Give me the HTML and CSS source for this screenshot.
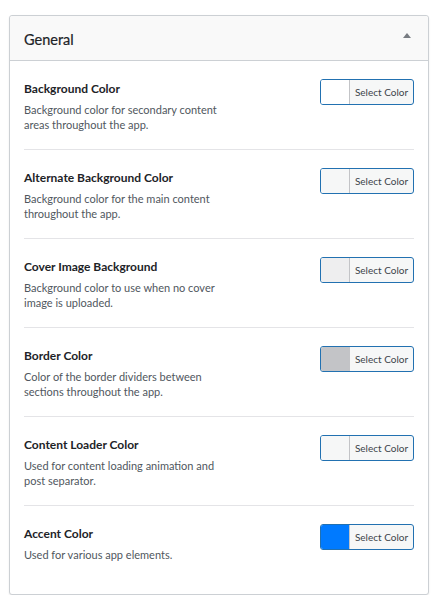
FILE: index.html
```html
<!DOCTYPE html>
<html lang="en">
<head>
    <meta charset="UTF-8">
    <meta name="viewport" content="width=device-width, initial-scale=1.0">
    <title>General Colors</title>
    <link rel="stylesheet" href="styles.css">
</head>
<body>
    <div class="panel">
        <div class="panel-header">
            <div class="panel-title">General</div>
            <span class="toggle"></span>
        </div>
        <div class="panel-body">
            <div class="setting">
                <div class="setting-info">
                    <div class="setting-title">Background Color</div>
                    <div class="setting-desc">Background color for secondary content areas throughout the app.</div>
                </div>
                <button class="color-button"><span class="swatch swatch-white"></span><span class="label">Select Color</span></button>
            </div>
            <div class="setting">
                <div class="setting-info">
                    <div class="setting-title">Alternate Background Color</div>
                    <div class="setting-desc">Background color for the main content throughout the app.</div>
                </div>
                <button class="color-button"><span class="swatch swatch-alt"></span><span class="label">Select Color</span></button>
            </div>
            <div class="setting">
                <div class="setting-info">
                    <div class="setting-title">Cover Image Background</div>
                    <div class="setting-desc">Background color to use when no cover image is uploaded.</div>
                </div>
                <button class="color-button"><span class="swatch swatch-cover"></span><span class="label">Select Color</span></button>
            </div>
            <div class="setting">
                <div class="setting-info">
                    <div class="setting-title">Border Color</div>
                    <div class="setting-desc">Color of the border dividers between sections throughout the app.</div>
                </div>
                <button class="color-button"><span class="swatch swatch-border"></span><span class="label">Select Color</span></button>
            </div>
            <div class="setting">
                <div class="setting-info">
                    <div class="setting-title">Content Loader Color</div>
                    <div class="setting-desc">Used for content loading animation and post separator.</div>
                </div>
                <button class="color-button"><span class="swatch swatch-loader"></span><span class="label">Select Color</span></button>
            </div>
            <div class="setting last">
                <div class="setting-info">
                    <div class="setting-title">Accent Color</div>
                    <div class="setting-desc">Used for various app elements.</div>
                </div>
                <button class="color-button"><span class="swatch swatch-accent"></span><span class="label">Select Color</span></button>
            </div>
        </div>
    </div>
</body>
</html>
```

FILE: styles.css
```css
body {
    margin: 0;
    background: #fff;
    font-family: Lato, 'Open Sans', sans-serif;
    color: #1d2327;
}

.panel {
    margin: 15px 10px 0 9px;
    border: 1px solid #ccd0d4;
    border-radius: 3px;
    box-shadow: 0 1px 2px rgba(0, 0, 0, 0.08);
    background: #fff;
}

.panel-header {
    display: flex;
    align-items: center;
    justify-content: space-between;
    height: 44px;
    padding: 0 17px 0 14px;
    background: #f9f9f9;
    border-bottom: 1px solid #ccd0d4;
    border-radius: 3px 3px 0 0;
}

.panel-title {
    font-size: 14.5px;
    padding-top: 2px;
    -webkit-text-stroke: 0.2px #1d2327;
}

.toggle {
    width: 0;
    height: 0;
    border-left: 4px solid transparent;
    border-right: 4px solid transparent;
    border-bottom: 5px solid #787c82;
    margin-bottom: 6px;
}

.panel-body {
    padding: 0 14px 0 14px;
}

.setting {
    display: flex;
    justify-content: space-between;
    align-items: flex-start;
    height: 88px;
    border-bottom: 1px solid #e4e4e7;
}

.setting.last {
    border-bottom: none;
    height: 88px;
}

.setting-info {
    width: 200px;
    padding-top: 20px;
}

.setting-title {
    font-size: 12px;
    font-weight: bold;
    line-height: 15px;
}

.setting-desc {
    margin-top: 6px;
    font-size: 11px;
    line-height: 15px;
    color: #50575e;
}

.color-button {
    display: flex;
    margin-top: 18px;
    padding: 0;
    height: 26px;
    width: 94px;
    border: 1px solid #2271b1;
    border-radius: 3px;
    background: #f6f7f7;
    overflow: hidden;
    cursor: pointer;
}

.swatch {
    width: 28px;
    height: 100%;
    border-right: 1px solid #c3c4c7;
}

.label {
    flex: 1;
    font-family: Lato, sans-serif;
    font-size: 10px;
    line-height: 24px;
    color: #3c434a;
    text-align: center;
}

.swatch-white { background: #fff; }
.swatch-alt { background: #f6f7f7; }
.swatch-cover { background: #eeeeef; }
.swatch-border { background: #c3c4c7; }
.swatch-loader { background: #f6f7f7; }
.swatch-accent { background: #007aff; }
```
